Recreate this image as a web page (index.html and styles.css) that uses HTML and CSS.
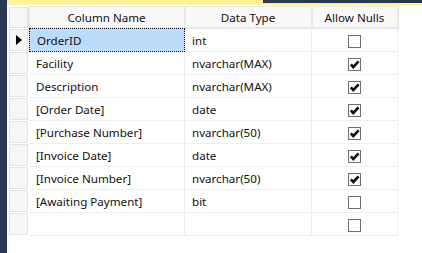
FILE: index.html
```html
<!DOCTYPE html>
<html lang="en">
<head>
    <meta charset="UTF-8">
    <title>Table Designer</title>
    <link rel="stylesheet" href="styles.css">
</head>
<body>
    <div class="side"></div>
    <div class="main">
        <div class="tabbar">
            <div class="tab"></div>
            <div class="rest"></div>
        </div>
        <table class="grid">
            <colgroup>
                <col class="c-sel">
                <col class="c-name">
                <col class="c-type">
                <col class="c-null">
            </colgroup>
            <thead>
                <tr>
                    <th class="sel"></th>
                    <th>Column Name</th>
                    <th>Data Type</th>
                    <th>Allow Nulls</th>
                </tr>
            </thead>
            <tbody>
                <tr>
                    <td class="sel"><span class="arrow"></span></td>
                    <td class="current">OrderID</td>
                    <td>int</td>
                    <td class="chk"><span class="box"></span></td>
                </tr>
                <tr>
                    <td class="sel"></td>
                    <td>Facility</td>
                    <td>nvarchar(MAX)</td>
                    <td class="chk"><span class="box on"></span></td>
                </tr>
                <tr>
                    <td class="sel"></td>
                    <td>Description</td>
                    <td>nvarchar(MAX)</td>
                    <td class="chk"><span class="box on"></span></td>
                </tr>
                <tr>
                    <td class="sel"></td>
                    <td>[Order Date]</td>
                    <td>date</td>
                    <td class="chk"><span class="box on"></span></td>
                </tr>
                <tr>
                    <td class="sel"></td>
                    <td>[Purchase Number]</td>
                    <td>nvarchar(50)</td>
                    <td class="chk"><span class="box on"></span></td>
                </tr>
                <tr>
                    <td class="sel"></td>
                    <td>[Invoice Date]</td>
                    <td>date</td>
                    <td class="chk"><span class="box on"></span></td>
                </tr>
                <tr>
                    <td class="sel"></td>
                    <td>[Invoice Number]</td>
                    <td>nvarchar(50)</td>
                    <td class="chk"><span class="box on"></span></td>
                </tr>
                <tr>
                    <td class="sel"></td>
                    <td>[Awaiting Payment]</td>
                    <td>bit</td>
                    <td class="chk"><span class="box"></span></td>
                </tr>
                <tr>
                    <td class="sel"></td>
                    <td></td>
                    <td></td>
                    <td class="chk"><span class="box"></span></td>
                </tr>
            </tbody>
        </table>
    </div>

    <script>
        // draw the tick inside every checked box
        document.querySelectorAll('.box.on').forEach(function(box) {
            box.innerHTML = '<svg width="11" height="11" viewBox="0 0 11 11"><path d="M1.8 5.3 L4.3 8 L9.6 2.4" fill="none" stroke="#111" stroke-width="2.6"/></svg>';
        });
    </script>
</body>
</html>
```

FILE: styles.css
```css
body { margin: 0; display: flex; height: 253px; background: #fff; font-family: "Noto Sans", "Open Sans", sans-serif; font-size: 11.6px; color: #111; overflow: hidden; }
.side { width: 7px; background: #293955; flex: none; }
.main { flex: 1; display: flex; flex-direction: column; }
.tabbar { display: flex; height: 5px; background: #fff29d; }
.tab { width: 256px; }
.rest { flex: 1; height: 3px; background: #293955; }
.grid { border-collapse: collapse; table-layout: fixed; width: 389px; margin: 1px 0 0 1px; }
.c-sel { width: 20px; }
.c-name { width: 156px; }
.c-type { width: 127px; }
.c-null { width: 86px; }
.grid th { height: 20px; padding: 0; font-weight: normal; text-align: center; background: #f9f9f9; border: 2px solid #e8e8e8; border-top-width: 1px; }
.grid td { height: 22px; padding: 0 0 0 7px; border: 1px solid #efefef; white-space: nowrap; overflow: hidden; }
.grid td.sel, .grid th.sel { padding: 0; background: #f6f6f6; border: 1px solid #fff; box-shadow: inset 0 0 0 1px #e4e4e4; }
.grid td.current { background: #bcdcfc; outline: 1px dotted #000; outline-offset: -1px; padding-left: 8px; }
.arrow { display: block; width: 0; height: 0; margin-left: 7px; border-left: 6px solid #000; border-top: 5px solid transparent; border-bottom: 5px solid transparent; }
.grid td.chk { padding: 0; text-align: center; }
.box { display: inline-block; width: 11px; height: 11px; border: 1px solid #707070; background: #fff; vertical-align: middle; }
.box svg { display: block; }
```
